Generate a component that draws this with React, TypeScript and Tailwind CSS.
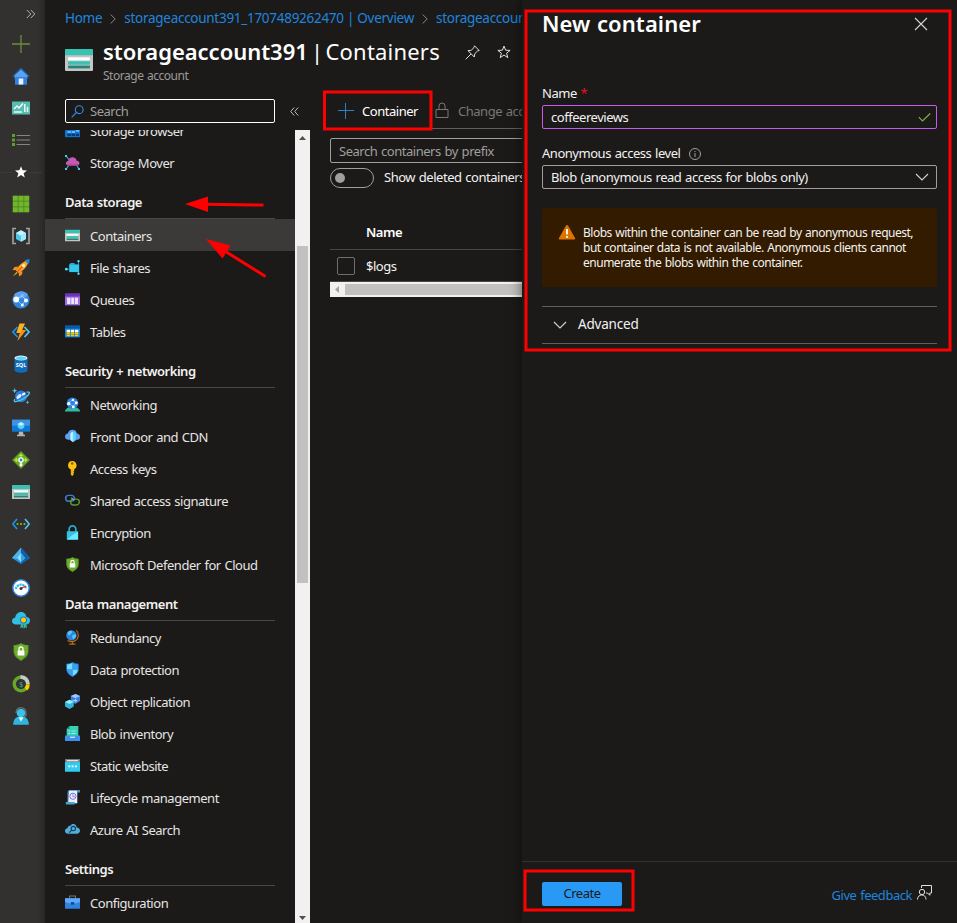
import type { ReactNode } from "react";

function Ic({ size = 15, children }: { size?: number; children: ReactNode }) {
  return (
    <svg width={size} height={size} viewBox="0 0 18 18" fill="none" className="block shrink-0">
      {children}
    </svg>
  );
}

const storage = (
  <>
    <path d="M0 4h18v11.5q0 .5-.5.5H.5q-.5 0-.5-.5z" fill="#c4c4c4" />
    <path d="M0 2.5Q0 2 .5 2h17q.5 0 .5.5V6H0z" fill="#37c2b1" />
    <path d="M2 7.3h14v2H2z" fill="#fff" />
    <path d="M2 9.8h14v2.200H2z" fill="#37c2b1" />
    <path d="M2 12.6h14v1.8H2z" fill="#258277" />
  </>
);
const shieldLock = (
  <>
    <path d="M9 0c2 1.500 4.500 2 7.500 2v6c0 5-3.500 7.500-7.500 10C5 15.500 1.500 13 1.500 8V2C4.500 2 7 1.500 9 0z" fill="#5e9624" />
    <path d="M9 1c2 1.300 4 1.700 6.500 1.800V8c0 4-3 6.500-6.500 8.700C5.500 14.500 2.500 12 2.500 8V2.800C5 2.700 7 2.300 9 1z" fill="#6dae2a" />
    <path d="M7 8V6a2 2 0 0 1 4 0v2" stroke="#fff" strokeWidth="1.300" />
    <rect x="5.600" y="7.500" width="6.800" height="5" rx=".5" fill="#fff" />
  </>
);

const railIcons: { name: string; icon: ReactNode }[] = [
  { name: "create", icon: <path d="M9 0v18M0 9h18" stroke="#6b8f3c" strokeWidth="1.300" /> },
  {
    name: "home",
    icon: (
      <>
        <path d="M3 8h12v9.500H3z" fill="#1a78dc" />
        <path d="M9 .5 17.700 9l-1 1L9 4 1.300 10l-1-1z" fill="#1463a8" />
        <path d="M9 2.500 15.500 8.500v3h-13v-3z" fill="#5ea0ef" />
        <path d="M3 10h12v7.500H3z" fill="#2e83e0" />
        <path d="M6.700 11.500h4.600v6H6.700z" fill="#e8f1fb" />
      </>
    ),
  },
  {
    name: "dashboard",
    icon: (
      <>
        <rect y="2.500" width="18" height="13" rx=".6" fill="#56bdb0" />
        <path d="m2 10 3-3 2 2 4-4.500" stroke="#fff" strokeWidth="1.300" />
        <path d="M2 13h8M12.800 5v8M15.500 8v5" stroke="#e6f7f4" strokeWidth="1.500" />
      </>
    ),
  },
  {
    name: "all services",
    icon: (
      <>
        <path d="M4.500 4.500H18M4.500 9H18M4.500 13.500H18" stroke="#858483" strokeWidth="1.200" />
        <path d="M0 3h3v3H0zM0 7.500h3v3H0zM0 12h3v3H0z" fill="#5f9e2b" />
      </>
    ),
  },
  {
    name: "favorites",
    icon: <path d="m9 3.200 1.600 4.100 4.400.2-3.400 2.700 1.200 4.200L9 12l-3.800 2.400 1.200-4.200L3 7.500l4.400-.2z" fill="#fff" />,
  },
  {
    name: "resources",
    icon: (
      <>
        <path d="M.8.800h16.400v16.400H.8z" fill="#4a7c1c" />
        <path d="M.8.800h5v5h-5zM6.500.800h5v5h-5zM12.200.800h5v5h-5zM.8 6.500h5v5h-5zM6.500 6.500h5v5h-5zM12.200 6.500h5v5h-5zM.8 12.200h5v5h-5zM6.500 12.200h5v5h-5zM12.200 12.200h5v5h-5z" fill="#70b62b" />
      </>
    ),
  },
  {
    name: "groups",
    icon: (
      <>
        <path d="M4 1.500H1v15h3M14 1.500h3v15h-3" stroke="#a3a3a3" strokeWidth="1.600" />
        <path d="m9 3.200 5 2.900v5.800l-5 2.900-5-2.900V6.100z" fill="#50c7e8" />
        <path d="m9 3.200 5 2.900-5 2.900-5-2.900z" fill="#c3f1ff" />
        <path d="M9 9v5.800l5-2.900V6.100z" fill="#9cebff" />
      </>
    ),
  },
  {
    name: "quickstart",
    icon: (
      <>
        <path d="M6 7.500 2.500 8 .5 11l4 .3zM10.500 12l-.5 3.500-3 2-.3-4z" fill="#f78d1e" />
        <path d="m4.500 13-3.800 4.500L5.500 14z" fill="#ffca00" />
        <path d="M16.500 1.500C11 2 7 6 4 11.500l2.500 2.500C12 11 16 7 16.500 1.500z" fill="#ffa51f" />
        <path d="M17.500.300c-2 0-3.500.5-4.700 1.400l3.500 3.500c.9-1.300 1.300-3 1.200-4.900z" fill="#1988d9" />
        <path d="m5 13 6-6" stroke="#e6571e" strokeWidth="1.300" />
        <circle cx="11.500" cy="6.500" r="1.600" fill="#fff3d0" />
      </>
    ),
  },
  {
    name: "app services",
    icon: (
      <>
        <circle cx="9" cy="9" r="8.600" fill="#2f86e0" />
        <path d="M2 4c4-5 11-5 14 0l-3 3-8 1z" fill="#5ea0ef" />
        <path d="M4 8 10 5l4 4-4 5z" stroke="#9fd0ff" strokeWidth=".9" />
        <circle cx="4.200" cy="8.500" r="2.900" fill="#fff" />
        <circle cx="10.300" cy="4.500" r="1.200" fill="#8ec3fb" />
        <circle cx="14" cy="9.500" r="2" fill="#fff" />
        <circle cx="10.300" cy="14" r="1.500" fill="#fff" />
      </>
    ),
  },
  {
    name: "function app",
    icon: (
      <>
        <path d="M5.500 4 1 9l4.500 5" stroke="#1b93eb" strokeWidth="1.700" />
        <path d="m12.500 4 4.500 5-4.500 5" stroke="#50c7f0" strokeWidth="1.700" />
        <path d="M7.500.500H13L10.200 7H14L5.500 17.700 8 10H4.300z" fill="#fbb01e" />
        <path d="M10.200 7H14L5.500 17.700 8 10z" fill="#f78d1e" />
      </>
    ),
  },
  {
    name: "sql",
    icon: (
      <>
        <path d="M2.500 3v12c0 1.500 3 2.700 6.500 2.700s6.500-1.200 6.500-2.700V3z" fill="#0f6cbd" />
        <ellipse cx="9" cy="3" rx="6.500" ry="2.600" fill="#e8e8e8" />
        <ellipse cx="9" cy="3.200" rx="5" ry="1.700" fill="#50d8ff" />
        <text x="9" y="12.300" textAnchor="middle" fontSize="5.500" fontWeight="700" fontFamily="Noto Sans" letterSpacing="0" fill="#fff">SQL</text>
      </>
    ),
  },
  {
    name: "cosmos",
    icon: (
      <>
        <circle cx="9" cy="9.300" r="5.900" fill="#2f7be0" />
        <ellipse cx="7" cy="9.500" rx="3" ry="1.700" transform="rotate(-40 7 9.500)" fill="#d5e9ff" />
        <ellipse cx="11.700" cy="7" rx="2" ry="1.200" transform="rotate(-30 11.700 7)" fill="#f1f8ff" />
        <path d="M14.500 5.200c4.500-.9 3.500 2-1.500 5.500-6 4-13 5.500-10 1.500" stroke="#50c7e8" strokeWidth="1.300" />
        <path d="M2.700.700 3.400 3l2 .7-2 .7-.7 2-.7-2-2-.7 2-.7zM15.500 13.200l.5 1.500 1.500.5-1.500.5-.5 1.700-.5-1.700-1.500-.5 1.500-.5z" fill="#50c7e8" />
      </>
    ),
  },
  {
    name: "vm",
    icon: (
      <>
        <path d="M0 .700h18v12H0z" fill="#0f78d4" />
        <path d="M0 .700h18v6H0z" fill="#3f91e6" />
        <path d="m9 3 3.300 1.900v3.700L9 10.500 5.700 8.600V4.900z" fill="#50d4f5" />
        <path d="m9 3 3.300 1.900L9 6.800 5.700 4.900z" fill="#c3f1ff" />
        <path d="M7 12.700h4l.5 3H13v1.500H5v-1.500h1.500z" fill="#b5b5b5" />
      </>
    ),
  },
  {
    name: "load balancer",
    icon: (
      <>
        <path d="m9 0 9 9-9 9-9-9z" fill="#5e9624" />
        <path d="m9 1.500 7.500 7.500L9 16.500 1.500 9z" fill="#6dae2a" />
        <path d="M9 2.500 6.700 5h4.600zM2.500 9 5 6.700v4.600zM15.500 9 13 6.700v4.600z" fill="#b4ec36" />
        <path d="M5 9h8M9 5v9" stroke="#b4ec36" />
        <path d="M9 10v4" stroke="#fff" strokeWidth="1.500" />
        <circle cx="9" cy="9" r="2.700" fill="#fff" />
        <circle cx="9" cy="9" r="1.400" fill="#2e83e0" />
        <circle cx="9" cy="14" r="1.500" fill="#fff" />
      </>
    ),
  },
  { name: "storage", icon: storage },
  {
    name: "vnet",
    icon: (
      <>
        <path d="m5 4-4.200 5L5 14" stroke="#1b93eb" strokeWidth="1.600" />
        <path d="m13 4 4.200 5-4.200 5" stroke="#50c7f0" strokeWidth="1.600" />
        <circle cx="5.500" cy="9" r="1.100" fill="#76bc2d" />
        <circle cx="9" cy="9" r="1.100" fill="#76bc2d" />
        <circle cx="12.500" cy="9" r="1.100" fill="#76bc2d" />
      </>
    ),
  },
  {
    name: "entra",
    icon: (
      <>
        <path d="M9 .800 18 11l-9 6-9-6z" fill="#2a8fdc" />
        <path d="M9 .800 18 11l-9 6z" fill="#0f5fae" />
        <path d="m9 .800-9 10.200 4.500 1L9 6.500z" fill="#4cb4e8" />
        <path d="m9 6 4 5-4 4-4-4z" fill="#8cdcf8" />
        <path d="m9 6 4 5-4 4z" fill="#32a5dc" />
      </>
    ),
  },
  {
    name: "monitor",
    icon: (
      <>
        <circle cx="9" cy="9" r="8.200" fill="#fff" stroke="#2e83e0" strokeWidth="1.400" />
        <path d="M3.800 10a5.300 5.300 0 0 1 10.400 0" stroke="#36b8e8" strokeWidth="2.300" strokeDasharray="2.200 .6" />
        <path d="m9 9.500 5-2.500" stroke="#e62323" strokeWidth="1.200" />
        <circle cx="9" cy="9.600" r="1.500" fill="#323130" />
      </>
    ),
  },
  {
    name: "advisor",
    icon: (
      <>
        <path d="M4 13.500C1.500 13.500 0 12 0 10.200 0 8.300 1.200 7 3.200 6.800 3.500 3.500 5.800 1 9 1c3.500 0 5 2.500 5.300 4.800 2.300.2 3.700 1.700 3.700 3.800 0 2.500-1.700 3.900-4 3.900z" fill="#32bfe4" />
        <path d="M9.500 11.500h2v6l-2-1.200-1.500 1zM12 11.500h2l1 5.500-1.500-.8-1.500 1.300z" fill="#31b99e" />
        <circle cx="11.500" cy="9" r="3.500" fill="#2075c7" />
        <circle cx="11.500" cy="9" r="2.500" fill="#ffca00" />
      </>
    ),
  },
  { name: "defender", icon: shieldLock },
  {
    name: "cost",
    icon: (
      <>
        <circle cx="9" cy="9" r="6.700" stroke="#66a826" strokeWidth="3.600" />
        <path d="M8.500 2.200A6.800 6.800 0 0 1 15.800 9" stroke="#c9c9c9" strokeWidth="4" />
        <path d="M15.800 9.500a6 6 0 0 1-2 4.500" stroke="#ffca00" strokeWidth="4" />
        <circle cx="9" cy="9" r="4.800" fill="#323130" />
        <text x="9" y="11.500" textAnchor="middle" fontSize="7" fontFamily="Noto Sans" fill="#31b9a5">$</text>
      </>
    ),
  },
  {
    name: "support",
    icon: (
      <>
        <path d="M1.200 17.800c0-5 2.500-7.500 5-8h5.600c2.500.5 5 3 5 8z" fill="#2fb5dd" />
        <path d="M4 6C4-1 14-1 14 6v2.500l-2 1.500" stroke="#777" strokeWidth="1.200" />
        <circle cx="9" cy="6" r="4.300" fill="#35c2ec" />
        <path d="m6.500 10.200 2.500 4.500 2.500-4.500z" fill="#e4f8ff" />
      </>
    ),
  },
];

type Item = { label: string; icon: ReactNode; selected?: boolean };

const storageItems: Item[] = [
  {
    label: "Storage browser",
    icon: (
      <>
        <path d="M0 1h18v16H0z" fill="#1173c9" />
        <path d="M3 9.500h4v2.500H3zM8 9.500h4v2.500H8zM13 7h4v3.500h-4z" fill="#6bb4f8" />
        <path d="M3 13h4v2.500H3zM8 13h4v2.500H8zM13 13h4v2.500h-4z" fill="#053a73" />
      </>
    ),
  },
  {
    label: "Storage Mover",
    icon: (
      <>
        <path d="m1.500 1.500 4 5M1.500 16.500l4-5M16.500 16.500l-3-5" stroke="#32b5d6" strokeWidth="1.300" />
        <path d="M4.500 13C2.500 13 1 11.700 1 10s1.200-2.700 2.800-2.900C4.300 4.500 6.300 2.700 9 2.700c2.900 0 4.600 1.800 5 4.200 2 .2 3.300 1.400 3.300 3.100S16 13 14 13z" fill="#c45bb0" />
        <path d="M1.500 11.500h15c-.5 1-1.500 1.500-2.500 1.500H4.500c-1.300 0-2.500-.5-3-1.500z" fill="#9b3f8b" />
        <path d="M0 0h2.500v2.500H0zM0 15.500h2.500V18H0zM15.500 15.500H18V18h-2.500z" fill="#50c7e8" />
      </>
    ),
  },
];

const sections: { title: string; items: Item[] }[] = [
  {
    title: "Data storage",
    items: [
      { label: "Containers", icon: storage, selected: true },
      {
        label: "File shares",
        icon: (
          <>
            <path d="M16.200 1.500v15M1.500 11H5" stroke="#2c9fc4" />
            <path d="M5 5.500 7 3.500h4l1 1.500h5v9.500H5z" fill="#2fa9d8" />
            <path d="M5.500 6h11.200v8.500H5.500z" fill="#32c8ec" />
            <circle cx="16.200" cy="1.500" r="1.400" fill="#50e6ff" />
            <circle cx="1.600" cy="11" r="1.600" fill="#50e6ff" />
            <circle cx="16.200" cy="16.500" r="1.400" fill="#50e6ff" />
          </>
        ),
      },
      {
        label: "Queues",
        icon: (
          <>
            <path d="M0 2h18v14H0z" fill="#9f6ee4" />
            <path d="M0 2h18v3.500H0z" fill="#6b35bd" />
            <path d="M2.500 7h4v7.500h-4zM7.500 7h3.500v7.500H7.500zM12 7h3.500v7.500H12z" fill="#eee2ff" />
          </>
        ),
      },
      {
        label: "Tables",
        icon: (
          <>
            <path d="M0 2h18v14H0z" fill="#1683df" />
            <path d="M0 2h18v3.500H0z" fill="#075aa8" />
            <path d="M2 7h4v2.500H2zM7 7h4v2.500H7zM12 7h4v2.500h-4z" fill="#fff" />
            <path d="M2 10h4v2H2zM7 10h4v2H7zM12 10h4v2h-4zM2 12.700h4v2H2zM7 12.700h4v2H7zM12 12.700h4v2h-4z" fill="#ffca00" />
          </>
        ),
      },
    ],
  },
  {
    title: "Security + networking",
    items: [
      {
        label: "Networking",
        icon: (
          <>
            <path d="M0 17.500V16l3-3h12l3 3v1.500z" fill="#31b99e" />
            <circle cx="9" cy="7.500" r="7" fill="#2e83e0" />
            <path d="m4 7 5-3.500L13 7l-3 4.500z" stroke="#8dc4ff" />
            <circle cx="4.500" cy="8" r="2" fill="#fff" />
            <circle cx="9.500" cy="3.500" r="1.400" fill="#fff" />
            <circle cx="13.500" cy="7" r="1.800" fill="#fff" />
            <circle cx="10" cy="12" r="1.700" fill="#fff" />
          </>
        ),
      },
      {
        label: "Front Door and CDN",
        icon: (
          <>
            <path d="M4.500 13C1.700 13 0 11.500 0 9.300 0 7.200 1.500 5.700 3.500 5.500 4 2.500 6 .800 9 .800s5 2 5.300 4.500C16.600 5.500 18 7 18 9.200c0 2.500-1.500 3.800-4 3.800z" fill="#5ea0ef" />
            <path d="M6.500 5 9.500 3v13l-3-2.500z" fill="#c8f2ff" />
            <path d="M9.500 3 13 5v8.500L9.500 16z" fill="#50d8ff" />
          </>
        ),
      },
      {
        label: "Access keys",
        icon: (
          <>
            <path d="M8.500 0a5.300 5.300 0 0 1 2.500 10v2l-1 1 1 1-1 1 .5 1-1.800 2L7 16.500V10.200A5.300 5.300 0 0 1 8.500 0z" fill="#ffc20d" />
            <circle cx="8.600" cy="3" r="1.500" fill="#8a5b05" />
            <path d="M8.300 10v6" stroke="#e59a00" />
          </>
        ),
      },
      {
        label: "Shared access signature",
        icon: (
          <>
            <rect x=".8" y="2.800" width="10.500" height="7" rx="3.500" stroke="#3f7fd0" strokeWidth="1.700" />
            <rect x="6.700" y="7.300" width="10.500" height="7" rx="3.500" stroke="#5c9b2b" strokeWidth="1.700" />
            <path d="M7.500 5.500 11 9" stroke="#70a5e8" strokeWidth="1.300" />
          </>
        ),
      },
      {
        label: "Encryption",
        icon: (
          <>
            <path d="M5 9V5a4 4 0 0 1 8 0v4" stroke="#32a8cc" strokeWidth="2" />
            <rect x="2.200" y="7.500" width="13.600" height="10.200" rx=".6" fill="#32c3e4" />
            <path d="M2.500 17.500 9 12l6.500-4v9.500z" fill="#6ee9ff" />
          </>
        ),
      },
      { label: "Microsoft Defender for Cloud", icon: shieldLock },
    ],
  },
  {
    title: "Data management",
    items: [
      {
        label: "Redundancy",
        icon: (
          <>
            <path d="M13.500.500c3.500 3 3.500 10-1.500 12.500-2.500 1.200-6 1.200-9-.5M9 13.500V17M5 17h7.500" stroke="#c06c12" strokeWidth="1.400" />
            <circle cx="7.700" cy="6.500" r="6.200" fill="#2e83e0" />
            <path d="M3 3c2-3 5-2.500 6-1L7 5 4 7zM9 6l4-1c1 2-.5 5-2.500 6L8.500 9z" fill="#50c7f0" />
          </>
        ),
      },
      {
        label: "Data protection",
        icon: (
          <>
            <path d="M9 0c2 1.500 4.500 2 7.500 2v6c0 5-3.500 7.500-7.500 10C5 15.500 1.500 13 1.500 8V2C4.500 2 7 1.500 9 0z" fill="#1f7bd0" />
            <path d="M9 1v8H2.500V3C5 2.800 7 2.300 9 1zM9 9h6.500c-.3 4-3.500 6-6.500 8z" fill="#6be0ff" />
            <path d="M9 1v8h6.500V3C13 2.800 11 2.300 9 1zM9 9H2.500c.3 4 3.500 6 6.500 8z" fill="#3f9cf0" />
          </>
        ),
      },
      {
        label: "Object replication",
        icon: (
          <>
            <path d="m12.500 0 5.500 2.500v6L12.500 12 7 8.500v-6z" fill="#3f7fdc" />
            <path d="m12.500 0 5.500 2.500L12.500 5 7 2.500z" fill="#9cc8ff" />
            <path d="m5.500 7 5 2.500v5.500l-5 3L0 15V9.500z" fill="#32b5d6" />
            <path d="m5.500 7 5 2.500-5 2.500L0 9.500z" fill="#8deeff" />
            <path d="M9 8h5m-2-2 2 2-2 2" stroke="#d6eaff" />
          </>
        ),
      },
      {
        label: "Blob inventory",
        icon: (
          <>
            <path d="M2 12V3.500L5.500 0H16v12z" fill="#35d0b5" />
            <path d="M5.500 0v3.500H2z" fill="#1d8c7c" />
            <path d="M4 6h2M7.500 6H13M4 9h2M7.500 9H13" stroke="#a5f0e0" strokeWidth="1.100" />
            <path d="M0 11.500h18V18H0z" fill="#3b91ed" />
            <path d="M6 13.500h6" stroke="#d5eaff" strokeWidth="1.500" />
          </>
        ),
      },
      {
        label: "Static website",
        icon: (
          <>
            <path d="M0 1.500h18v15H0z" fill="#32cdee" />
            <path d="M0 1.500h18V5H0z" fill="#797775" />
            <path d="M2 3.300h14" stroke="#fff" strokeWidth="1.300" />
            <path d="M4 9h2.300v2H4zM8 9h2.300v2H8zM12 9h2.300v2H12z" fill="#fff" />
          </>
        ),
      },
      {
        label: "Lifecycle management",
        icon: (
          <>
            <path d="M4.500 0H18v3h-3v13H3V2z" fill="#3f92c7" />
            <path d="M5 1h9.500v15H4z" fill="#f1efff" />
            <path d="M1 14.500h10.500V17c-1 .5-9 .5-10.500 0z" fill="#4aa3d5" />
            <circle cx="9.500" cy="7.500" r="3.700" stroke="#8172c8" strokeWidth="1.200" />
            <path d="M9.500 5v3H12" stroke="#8172c8" />
          </>
        ),
      },
      {
        label: "Azure AI Search",
        icon: (
          <>
            <path d="M4 14C1.500 14 0 12.700 0 10.800 0 9 1.200 7.700 3 7.500c0-2 1.500-3.300 3.500-3 1-1.700 2.500-2.300 4-2 2.300.4 3.500 2 3.500 4 2.500.3 4 1.700 4 3.700 0 2.500-1.500 3.800-4 3.800z" fill="#51aeda" />
            <circle cx="10" cy="7.800" r="2.600" stroke="#153e56" strokeWidth="1.300" />
            <path d="m8 9.700-3 3" stroke="#153e56" strokeWidth="1.500" />
          </>
        ),
      },
    ],
  },
  {
    title: "Settings",
    items: [
      {
        label: "Configuration",
        icon: (
          <>
            <path d="M5.500 4V1.200h7V4" stroke="#767676" strokeWidth="1.300" />
            <path d="M0 4h18v12.500H0z" fill="#2e83e0" />
            <path d="M0 4h18v4.500l-5 1.500H5L0 8.500z" fill="#5ea8f5" />
            <path d="M7 8.500h4v3H7z" fill="#0c4f92" />
          </>
        ),
      },
    ],
  },
];

function MenuRow({ item }: { item: Item }) {
  return (
    <div className={`flex h-8 items-center pl-5 ${item.selected ? "bg-[#3b3a39]" : ""}`}>
      <Ic>{item.icon}</Ic>
      <span className="ml-2.5 pt-1 text-[#e6e5e4]">{item.label}</span>
    </div>
  );
}

function Rail() {
  return (
    <nav className="flex w-[45px] shrink-0 flex-col bg-gradient-to-r from-[#323130] from-85% to-[#282726]">
      <div className="flex h-7 items-center pl-[26px]">
        <svg width="10" height="10" viewBox="0 0 10 10" fill="none" stroke="#b5b4b3">
          <path d="m.8 1 4 4-4 4M4.800 1l4 4-4 4" />
        </svg>
      </div>
      {railIcons.map((r) => (
        <div key={r.name} className="flex h-8 items-center justify-center pr-[3px]">
          {r.name === "favorites" ? (
            <>
              <span className="h-px flex-1 bg-[#3d3c3b]" />
              <Ic size={18}>{r.icon}</Ic>
              <span className="h-px flex-1 bg-[#3d3c3b]" />
            </>
          ) : (
            <Ic size={18}>{r.icon}</Ic>
          )}
        </div>
      ))}
    </nav>
  );
}

function Menu() {
  return (
    <aside className="flex w-[265px] shrink-0 flex-col">
      <div className="flex h-[37px] items-start pl-5 pt-1.5">
        <div className="flex h-6 w-[210px] items-center rounded-[2px] border border-white pl-[5px]">
          <svg width="13" height="13" viewBox="0 0 13 13" fill="none" stroke="#2f8fe8" strokeWidth="1.100">
            <circle cx="8.200" cy="4.700" r="3.900" />
            <path d="M5.400 7.500.7 12.300" />
          </svg>
          <span className="ml-1.5 pt-0.5 text-[#a19f9d]">Search</span>
        </div>
        <svg className="ml-[15px] mt-2" width="9" height="9" viewBox="0 0 9 9" fill="none" stroke="#bbb">
          <path d="m4.200.500-3.500 4 3.500 4M8.200.500l-3.500 4 3.500 4" />
        </svg>
      </div>
      <div className="flex h-[793px]">
        <div className="w-[250px] overflow-hidden">
          <div className="-mt-4">
            {storageItems.map((i) => (
              <MenuRow key={i.label} item={i} />
            ))}
          </div>
          {sections.map((s) => (
            <section key={s.title}>
              <h3 className="ml-5 h-[41px] w-[210px] border-b border-[#484644] pt-[15px] leading-[18px] font-semibold text-[#f3f2f1]">{s.title}</h3>
              {s.items.map((i) => (
                <MenuRow key={i.label} item={i} />
              ))}
            </section>
          ))}
        </div>
        <div className="flex w-[15px] flex-col items-center bg-[#f1f1f1]">
          <svg width="7" height="4" viewBox="0 0 7 4" className="mt-1.5 shrink-0">
            <path d="M3.500 0 7 4H0z" fill="#505050" />
          </svg>
          <div className="mt-[106px] h-[337px] w-[11px] shrink-0 bg-[#c1c1c1]" />
          <svg width="7" height="4" viewBox="0 0 7 4" className="mt-auto mb-[3px] shrink-0">
            <path d="M0 0h7L3.500 4z" fill="#505050" />
          </svg>
        </div>
      </div>
    </aside>
  );
}

function Crumb() {
  return (
    <svg width="6" height="10" viewBox="0 0 6 10" fill="none" stroke="#8a8886" className="mx-2 mt-0.5 shrink-0">
      <path d="m.7.500 4.500 4.500L.7 9.500" />
    </svg>
  );
}

function Header() {
  return (
    <header className="h-[93px] pl-5">
      <div className="flex h-9 items-center text-[13.500px] tracking-[-0.28px] [word-spacing:0px] whitespace-nowrap text-[#1f85de]">
        <span>Home</span>
        <Crumb />
        <span>storageaccount391_1707489262470 | Overview</span>
        <Crumb />
        <span>storageaccount391</span>
      </div>
      <div className="flex">
        <div className="mt-2.5">
          <Ic size={28}>{storage}</Ic>
        </div>
        <div className="ml-2.5">
          <div className="flex h-8 items-center whitespace-nowrap">
            <h1 className="-mt-0.5 flex text-[22px] leading-8 tracking-normal text-white">
              <span className="w-[208px] font-semibold tracking-[-0.03px]">storageaccount391</span>
              <span className="w-[14.500px]">|</span>
              <span className="w-[114.500px] tracking-[0.2px]">Containers</span>
            </h1>
            <svg width="15" height="15" viewBox="0 0 15 15" fill="none" stroke="#e1dfdd" className="ml-[25px]">
              <path d="M9.500.800 14.200 5.500 12.500 6 9.800 8.700 9.300 12 3 5.700l3.300-.5L9 2.500zM6 9 .7 14.300" />
            </svg>
            <svg width="14" height="14" viewBox="0 0 14 14" fill="none" stroke="#e1dfdd" className="ml-[17px]">
              <path d="m7 1 1.600 4.200 4.500.2-3.500 2.800 1.200 4.400L7 10.100l-3.800 2.500 1.200-4.400L.9 5.400l4.500-.2z" />
            </svg>
          </div>
          <div className="text-[12px] leading-4 text-[#9c9a98]">Storage account</div>
        </div>
      </div>
    </header>
  );
}

function Content() {
  return (
    <main className="w-[212px] shrink-0 overflow-hidden whitespace-nowrap">
      <div className="ml-5 flex h-9 items-center border-b border-[#605e5c] pl-2">
        <svg width="16" height="16" viewBox="0 0 16 16" stroke="#2484d2" fill="none" className="shrink-0">
          <path d="M7.500 0v16M0 7.500h16" />
        </svg>
        <span className="ml-2 pt-0.5 text-white">Container</span>
        <svg width="14" height="17" viewBox="0 0 14 17" stroke="#797775" fill="none" className="ml-[17px] shrink-0">
          <path d="M1 7.500h12v8H1zM4 7.500V4a3 3 0 0 1 6 0v3.500" />
        </svg>
        <span className="ml-[9px] pt-0.5 text-[#797775]">Change access level</span>
      </div>
      <div className="mt-[9px] ml-5 flex h-[25px] w-60 items-center rounded-[2px] border border-[#a19f9d] pt-[3px] pl-2 text-[#a19f9d]">Search containers by prefix</div>
      <div className="mt-[5px] ml-5 flex h-5 items-center">
        <div className="flex h-5 w-11 shrink-0 items-center rounded-full border border-[#a19f9d] pl-1">
          <div className="size-[10px] rounded-full bg-[#a19f9d]" />
        </div>
        <span className="ml-2.5 text-[#f3f2f1]">Show deleted containers</span>
      </div>
      <div className="mt-[27px] ml-5 flex h-[35px] items-center border-b border-[#484644] pt-0.5 pl-9 font-semibold text-white">Name</div>
      <div className="ml-5 flex h-8 items-center border-b border-[#484644] pl-[7px] text-[#f3f2f1]">
        <div className="size-[18px] rounded-[2px] border border-[#706e6c]" />
        <span className="ml-[11px] pt-0.5">$logs</span>
      </div>
      <div className="ml-5 flex h-[15px] items-center bg-[#f1f1f1]">
        <svg width="4" height="7" viewBox="0 0 4 7" className="ml-[5px]">
          <path d="M4 0v7L0 3.500z" fill="#a3a3a3" />
        </svg>
        <div className="ml-1.5 h-[11px] flex-1 bg-[#c1c1c1]" />
      </div>
    </main>
  );
}

function Chevron() {
  return (
    <svg width="14" height="8" viewBox="0 0 14 8" fill="none" stroke="#d6d4d2" strokeWidth="1.100" className="shrink-0">
      <path d="m1 1 6 6 6-6" />
    </svg>
  );
}

function Panel() {
  return (
    <section className="z-10 flex w-[435px] shrink-0 flex-col bg-[#1b1a19] shadow-[0_0_12px_rgba(0,0,0,0.55)]">
      <div className="flex-1 px-5">
        <div className="flex h-12 items-center justify-between pr-[9px]">
          <h2 className="-mt-0.5 text-[22px] font-semibold tracking-[0.08px] text-white">New container</h2>
          <svg width="14" height="14" viewBox="0 0 14 14" fill="none" stroke="#d6d4d2" strokeWidth="1.100">
            <path d="m1 1 12 12M13 1 1 13" />
          </svg>
        </div>
        <div className="mt-9 h-[21px] leading-[18px] text-[#f3f2f1]">
          Name <span className="text-[#e81123]">*</span>
        </div>
        <div className="flex h-6 items-center justify-between rounded-[2px] border border-[#c85af0] pr-[5px] pl-2 text-[#f3f2f1]">
          <span className="pt-0.5">coffeereviews</span>
          <svg width="13" height="9" viewBox="0 0 13 9" fill="none" stroke="#7fae48" strokeWidth="1.200">
            <path d="m.8 4.200 3.700 3.800L12.200.500" />
          </svg>
        </div>
        <div className="mt-[15px] flex h-[21px] items-start leading-[18px] text-[#f3f2f1]">
          Anonymous access level
          <svg width="12" height="12" viewBox="0 0 12 12" fill="none" stroke="#a19f9d" className="mt-1 ml-[9px]">
            <circle cx="6" cy="6" r="5.500" />
            <path d="M6 5v4M6 3v1" />
          </svg>
        </div>
        <div className="flex h-6 items-center justify-between rounded-[2px] border border-[#a19f9d] pr-[7px] pl-2 text-[#f3f2f1]">
          <span className="pt-0.5">Blob (anonymous read access for blobs only)</span>
          <Chevron />
        </div>
        <div className="mt-[19px] flex h-[79px] rounded-[2px] bg-[#331b00] pt-[17px] pl-4">
          <svg width="18" height="15" viewBox="0 0 18 15" className="shrink-0">
            <path d="M7.900.700Q9-.7 10.100.700L17 13q.7 1.500-.7 1.500H1.700Q.3 14.500 1 13z" fill="#db7500" />
            <path d="M9 4v5.500M9 11v1.700" stroke="#fff" strokeWidth="1.800" />
          </svg>
          <p className="ml-[7px] text-[12px] leading-[15px] tracking-[-0.49px] whitespace-nowrap text-[#f3f2f1]">
            Blobs within the container can be read by anonymous request,
            <br />
            but container data is not available. Anonymous clients cannot
            <br />
            enumerate the blobs within the container.
          </p>
        </div>
        <div className="mt-[19px] flex h-[38px] items-center border-y border-[#605e5c] pl-[11px] text-[#f3f2f1]">
          <Chevron />
          <span className="ml-[11px] pb-px text-[13.500px] tracking-[-0.2px]">Advanced</span>
        </div>
      </div>
      <footer className="flex h-[62px] items-center justify-between border-t border-[#323130] pr-[25px] pl-5">
        <button className="mt-[3px] h-6 w-20 rounded-[2px] bg-[#2899f5] text-[#1b1a19]">Create</button>
        <div className="mt-1 flex items-center text-[#1f85de]">
          <span className="pt-0.5">Give feedback</span>
          <svg width="15" height="15" viewBox="0 0 15 15" fill="none" stroke="#e1dfdd" className="mb-1 ml-[5px]">
            <path d="M4.500 3V.500h10V8h-1.700v2.300L10.500 8H9M.5 14.500c0-3 2-4.500 4.300-4.500s4.200 1.500 4.200 4.500" />
            <circle cx="5" cy="7" r="2.700" />
          </svg>
        </div>
      </footer>
    </section>
  );
}

export default function App() {
  return (
    <div className="relative flex h-[923px] w-[957px] overflow-hidden bg-[#1b1a19] font-['Noto_Sans',sans-serif] text-[13px] tracking-[-0.47px] [word-spacing:0.8px]">
      <Rail />
      <div className="w-[477px] shrink-0 overflow-hidden">
        <Header />
        <div className="flex">
          <Menu />
          <Content />
        </div>
      </div>
      <Panel />
      <svg className="pointer-events-none absolute inset-0 z-20" width="957" height="923" fill="none" stroke="#f00" strokeWidth="3">
        <rect x="526" y="11" width="424" height="339" />
        <rect x="324.500" y="92" width="106.500" height="37" />
        <rect x="525" y="871" width="108" height="39" />
        <path d="m206 204.300 57.500.7M224 250.500l41.500 26" />
        <path d="m185 204 23-7.500V212zM206 239l24.500 6.500-8 13z" fill="#f00" stroke="none" />
      </svg>
    </div>
  );
}
